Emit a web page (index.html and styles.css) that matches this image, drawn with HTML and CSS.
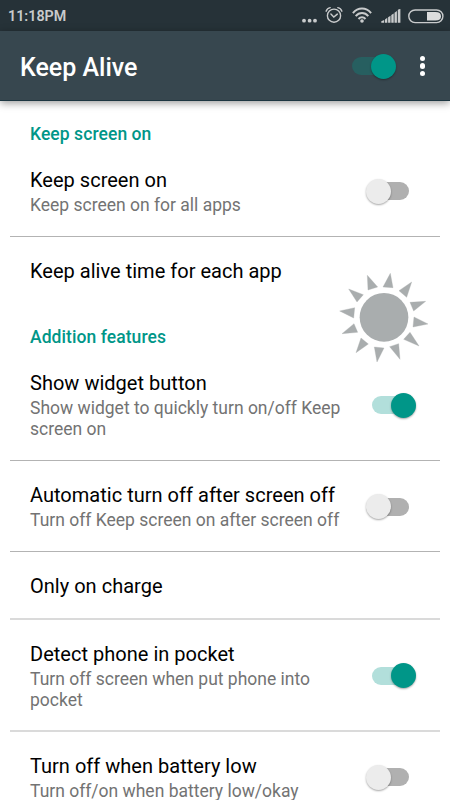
FILE: index.html
```html
<!DOCTYPE html>
<html lang="en">
<head>
  <meta charset="UTF-8" />
  <title>Keep Alive</title>
  <meta name="viewport" content="width=device-width, initial-scale=1" />
  <link rel="stylesheet" href="styles.css">
</head>
<body>

  <div class="status-bar">
    <span class="clock">11:18PM</span>
    <div class="status-icons">
      <svg width="16" height="20" viewBox="0 0 16 20" fill="#c9cbcc">
        <circle cx="2" cy="14.7" r="1.9"/><circle cx="7.6" cy="14.7" r="1.9"/><circle cx="13" cy="14.7" r="1.9"/>
      </svg>
      <svg class="alarm" width="18" height="20" viewBox="0 0 18 20" fill="none" stroke="#c9cbcc" stroke-width="1.4" stroke-linecap="round">
        <circle cx="9" cy="9.7" r="6.6"/>
        <path d="M5.9 8.1 8.8 11 12.3 8.1M1.1 5.2C1.8 3.2 3.4 1.9 5.2 1.6M16.9 5.2C16.2 3.2 14.6 1.9 12.8 1.6"/>
      </svg>
      <svg class="wifi" width="20" height="20" viewBox="0 0 20 20" fill="none" stroke="#c9cbcc" stroke-width="2">
        <path d="M.9 7.1C6 1.1 14 1.1 19.1 7.1M3.7 10.1C7.2 6.1 12.8 6.1 16.3 10.1M6.5 13C8.5 10.8 11.5 10.8 13.5 13"/>
        <circle cx="10" cy="15" r="1.8" fill="#c9cbcc" stroke="none"/>
      </svg>
      <svg class="signal" width="20" height="20" viewBox="0 0 20 20" fill="#c9cbcc">
        <path d="M.3 16.7V15.3L3.2 13.9V16.7zM4 16.7V13.4L6.3 11.8V16.7zM7.1 16.7V11.3L9.5 9.7V16.7zM10.3 16.7V9.1L12.7 7.4V16.7zM13.5 16.7V6.8L15.9 5V16.7zM16.8 16.7V4.1Q17.5 3 19.4 3V16.7z"/>
      </svg>
      <svg class="battery" width="36" height="20" viewBox="0 0 36 20">
        <rect x=".8" y="4" width="34.1" height="12.6" rx="6.3" fill="none" stroke="#c9cbcc" stroke-width="1.4"/>
        <path d="M19 6H27.5Q33 6 33 10.3T27.5 14.6H19z" fill="#dcdddd"/>
      </svg>
    </div>
  </div>

  <header class="toolbar">
    <h1>Keep Alive</h1>
    <div class="switch on dark"><span class="thumb"></span></div>
    <div class="menu"><span></span><span></span><span></span></div>
  </header>

  <main class="settings">
    <h2>Keep screen on</h2>
    <section class="item divider">
      <div class="text">
        <p class="title">Keep screen on</p>
        <p class="summary">Keep screen on for all apps</p>
      </div>
      <div class="switch"><span class="thumb"></span></div>
    </section>
    <section class="item">
      <div class="text">
        <p class="title">Keep alive time for each app</p>
      </div>
    </section>

    <h2>Addition features</h2>
    <section class="item divider">
      <div class="text">
        <p class="title">Show widget button</p>
        <p class="summary">Show widget to quickly turn on/off Keep<br>screen on</p>
      </div>
      <div class="switch on"><span class="thumb"></span></div>
    </section>
    <section class="item divider">
      <div class="text">
        <p class="title">Automatic turn off after screen off</p>
        <p class="summary">Turn off Keep screen on after screen off</p>
      </div>
      <div class="switch"><span class="thumb"></span></div>
    </section>
    <section class="item divider light">
      <div class="text">
        <p class="title">Only on charge</p>
      </div>
    </section>
    <section class="item divider light">
      <div class="text">
        <p class="title">Detect phone in pocket</p>
        <p class="summary">Turn off screen when put phone into<br>pocket</p>
      </div>
      <div class="switch on"><span class="thumb"></span></div>
    </section>
    <section class="item">
      <div class="text">
        <p class="title">Turn off when battery low</p>
        <p class="summary">Turn off/on when battery low/okay</p>
      </div>
      <div class="switch"><span class="thumb"></span></div>
    </section>
  </main>

  <!-- Floating widget button -->
  <svg class="sun" viewBox="0 0 330 330" fill="#a9adae">
    <circle cx="162" cy="172" r="73"/>
    <path stroke="#a9adae" stroke-width="1" d="M112 46 143 81 114 90zM181 40 189 83 159 81zM245 66 230 112 207 92zM287 124 251 153 240 127zM294 192 249 201 252 171zM267 258 221 238 240 217zM210 298 179 260 206 251zM141 306 133 261 162 264zM78 278 93 234 115 252zM36 221 72 191 83 217zM29 153 74 143 71 174zM56 87 100 104 81 126z"/>
  </svg>

</body>
</html>
```
FILE: styles.css
```css
* {
  box-sizing: border-box;
  margin: 0;
  padding: 0;
}

body {
  width: 450px;
  height: 800px;
  overflow: hidden;
  position: relative;
  background: #fff;
  font-family: Roboto, sans-serif;
}

/* Status bar */
.status-bar {
  height: 31px;
  background: #263238;
  display: flex;
  align-items: center;
  justify-content: space-between;
  padding: 1px 6px 0 8px;
}

.clock {
  color: #c9cbcc;
  font-size: 14.3px;
  font-weight: 600;
}

.status-icons {
  display: flex;
}
.status-icons svg {
  display: block;
}
.alarm { margin-left: 7px; }
.wifi { margin-left: 9px; }
.signal { margin-left: 9px; }
.battery { margin-left: 7px; }

/* Toolbar */
.toolbar {
  height: 70px;
  background: #37474f;
  border-bottom: 1px solid #1d3641;
  box-shadow: 0 2px 8px rgba(0, 0, 0, 0.4);
  display: flex;
  align-items: center;
  padding: 1px 25px 0 20px;
}
.toolbar h1 {
  flex: 1;
  color: #fff;
  font-size: 25px;
  font-weight: 500;
  line-height: 30px;
  padding-top: 4px;
}

.menu {
  display: flex;
  flex-direction: column;
  gap: 2px;
  margin-left: 24px;
}
.menu span {
  width: 5.5px;
  height: 5.5px;
  border-radius: 50%;
  background: #fff;
}

/* Switch */
.switch {
  width: 44px;
  height: 26px;
  display: flex;
  align-items: center;
  flex-shrink: 0;
  position: relative;
}
.switch::before {
  content: "";
  position: absolute;
  top: 4px;
  left: 8px;
  width: 36px;
  height: 18px;
  border-radius: 9px;
  background: #b0b0b0;
}
.thumb {
  position: relative;
  width: 25px;
  height: 25px;
  margin-left: 1px;
  border-radius: 50%;
  background: #ececec;
  box-shadow: 0 1px 2px rgba(0, 0, 0, 0.35);
}
.switch.on {
  justify-content: flex-end;
}
.switch.on::before {
  left: 0;
  background: #b2dfdb;
}
.switch.on .thumb {
  background: #009688;
}
.switch.dark::before {
  background: #275f60;
}

/* Settings list */
.settings {
  padding: 0 10px;
}
.settings h2 {
  height: 44.75px;
  padding: 22px 20px 0;
  color: #009688;
  font-size: 17.5px;
  font-weight: 500;
  line-height: 22px;
  letter-spacing: 0.07px;
}

.item {
  min-height: 67.5px;
  padding: 21px 31px 18px 20px;
  display: flex;
  align-items: center;
  justify-content: space-between;
}
.item .switch {
  margin-bottom: 2px;
}
.item .switch.on {
  margin-right: -7px;
}
.divider {
  border-bottom: 1px solid #b3b3b3;
}
.divider.light {
  border-bottom: 2px solid #dadada;
  padding-bottom: 17px;
}
.title {
  color: #000;
  font-size: 20px;
  line-height: 27.5px;
  letter-spacing: 0.02px;
}
.summary {
  color: #737373;
  font-size: 17.5px;
  line-height: 21px;
  white-space: nowrap;
  padding: 0.75px 0 1.75px;
}

.sun {
  position: absolute;
  left: 330px;
  top: 260px;
  width: 110px;
  height: 110px;
}
```
